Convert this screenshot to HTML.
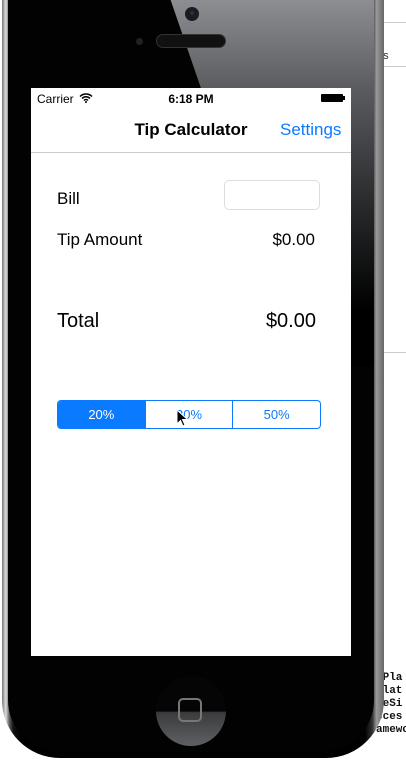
<!DOCTYPE html>
<html><head><style>
body{margin:0;width:406px;height:761px;overflow:hidden;background:#fff;position:relative;font-family:"Liberation Sans",sans-serif}
.abs{position:absolute}
</style></head><body>
<div class="abs" style="left:380px;top:22px;width:26px;height:1px;background:#ccc"></div>
<div class="abs" style="left:380px;top:66px;width:26px;height:1px;background:#ccc"></div>
<div class="abs" style="left:380px;top:352px;width:26px;height:1px;background:#ccc"></div>
<div class="abs" style="left:377px;top:50px;font-size:11px;color:#333">es</div>
<div class="abs" style="left:376px;top:672px;font:bold 11px/13px 'Liberation Mono',monospace;color:#111">/Pla<br>ulat<br>neSi<br>cces<br>amewo</div>
<!-- phone body -->
<div class="abs" style="left:2px;top:-60px;width:382px;height:818px;border-radius:58px;background:linear-gradient(90deg,#777,#ddd 1%,#555 2%,#111 3%,#000 5%,#000 95%,#333 97%,#999 98%,#666 100%);"></div>
<div class="abs" style="left:8px;top:-54px;width:366px;height:806px;border-radius:52px;background:#020203;overflow:hidden">
 <div class="abs" style="top:0;width:700px;height:420px;background:linear-gradient(180deg,#9a9ca0 0px,#8c8e92 54px,#5a5c60 142px,#2a2c2e 254px,#000 364px);transform-origin:0 0;left:144px;transform:skewX(19deg)"></div>
</div>
<div class="abs" style="left:185px;top:7px;width:14px;height:14px;border-radius:50%;background:#1a1c22"></div>
<div class="abs" style="left:190px;top:11px;width:4px;height:4px;border-radius:50%;background:#234"></div>
<div class="abs" style="left:136px;top:38px;width:7px;height:7px;border-radius:50%;background:#222"></div>
<div class="abs" style="left:156px;top:34px;width:70px;height:14px;border-radius:7px;background:#111;border:1px solid #333;box-sizing:border-box"></div>
<!-- home button -->
<div class="abs" style="left:156px;top:676px;width:70px;height:70px;border-radius:50%;background:linear-gradient(180deg,#050505 50%,#3a3b3d 52%,#5e6063)"></div>
<div class="abs" style="left:178px;top:698px;width:24px;height:24px;border-radius:5px;border:2px solid #777;box-sizing:border-box"></div>
<!-- screen -->
<div class="abs" style="left:31px;top:88px;width:320px;height:568px;background:#fff;overflow:hidden">
 <div class="abs" style="left:6px;top:4px;font-size:12px;color:#000">Carrier</div>
 <svg class="abs" style="left:48px;top:5px" width="14" height="10" viewBox="0 0 14 10"><path d="M1 3.5a8.5 8.5 0 0 1 12 0M3 5.5a5.5 5.5 0 0 1 8 0M5 7.5a2.5 2.5 0 0 1 4 0" stroke="#000" stroke-width="1.5" fill="none"/><circle cx="7" cy="9" r="1" fill="#000"/></svg>
 <div class="abs" style="left:0;width:320px;top:4px;text-align:center;font-size:12px;font-weight:bold">6:18 PM</div>
 <div class="abs" style="left:290px;top:6px;width:22px;height:8px;background:#000;border-radius:1px"></div>
 <div class="abs" style="left:312px;top:8px;width:2px;height:4px;background:#000"></div>
 <div class="abs" style="left:0;width:320px;top:32px;text-align:center;font-size:17px;font-weight:bold">Tip Calculator</div>
 <div class="abs" style="left:249px;top:32px;font-size:17px;color:#0a7aff">Settings</div>
 <div class="abs" style="left:0;top:64px;width:320px;height:1px;background:#ccc"></div>
 <div class="abs" style="left:26px;top:101px;font-size:17px">Bill</div>
 <div class="abs" style="left:193px;top:92px;width:96px;height:30px;border:1px solid #ddd;border-radius:5px;box-sizing:border-box"></div>
 <div class="abs" style="left:26px;top:142px;font-size:17px">Tip Amount</div>
 <div class="abs" style="left:200px;width:84px;top:142px;font-size:17px;text-align:right">$0.00</div>
 <div class="abs" style="left:26px;top:222px;font-size:20px">Total</div>
 <div class="abs" style="left:200px;width:85px;top:222px;font-size:20px;text-align:right">$0.00</div>
 <div class="abs" style="left:26px;top:312px;width:264px;height:29px;border:1px solid #0a7aff;border-radius:4px;box-sizing:border-box;display:flex;font-size:13px;color:#0a7aff;overflow:hidden">
  <div style="flex:1;background:#0a7aff;color:#fff;text-align:center;line-height:27px">20%</div>
  <div style="flex:1;text-align:center;line-height:27px;border-left:1px solid #0a7aff">30%</div>
  <div style="flex:1;text-align:center;line-height:27px;border-left:1px solid #0a7aff">50%</div>
 </div>
 <svg class="abs" style="left:145px;top:321px" width="12" height="18" viewBox="0 0 12 18"><path d="M1 1v14l3.5-3.5 2.5 5.5 2-1-2.5-5.5h5z" fill="#000" stroke="#fff" stroke-width="1"/></svg>
</div>
</body></html>
